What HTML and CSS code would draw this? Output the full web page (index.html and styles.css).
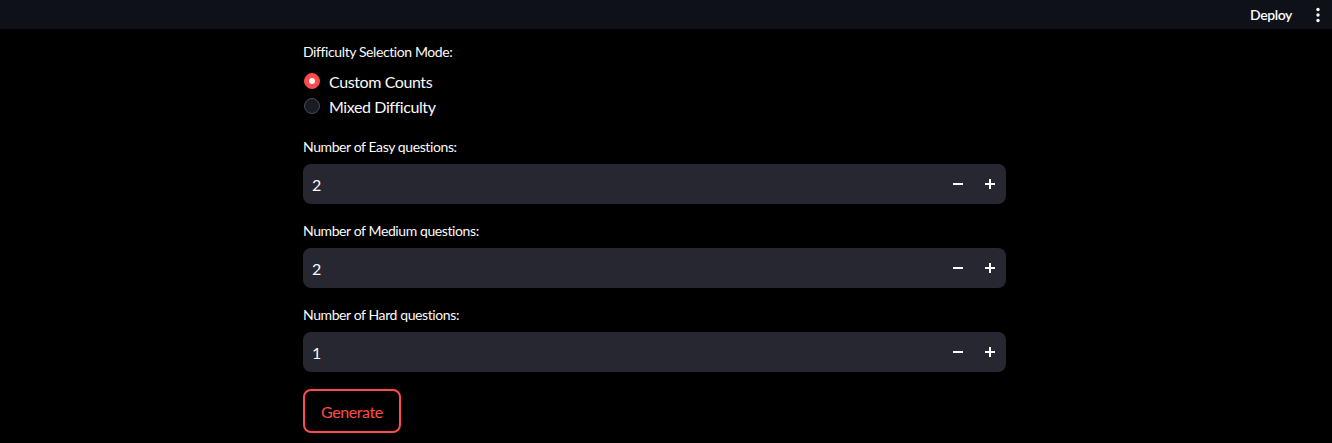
FILE: index.html
```html
<!DOCTYPE html>
<html>
<head>
<meta charset="utf-8">
<link rel="stylesheet" href="styles.css">
</head>
<body>
<header class="topbar">
  <span class="deploy">Deploy</span>
  <span class="kebab">
    <svg width="4" height="16" viewBox="0 0 4 16"><circle cx="2" cy="2.5" r="1.7" fill="#fafafa"/><circle cx="2" cy="8" r="1.7" fill="#fafafa"/><circle cx="2" cy="13.5" r="1.7" fill="#fafafa"/></svg>
  </span>
</header>
<main class="main">
  <div class="column">
    <div class="widget radio-widget">
      <div class="label">Difficulty Selection Mode:</div>
      <div class="radios">
        <div class="radio"><span class="dot on"></span><span>Custom Counts</span></div>
        <div class="radio"><span class="dot"></span><span>Mixed Difficulty</span></div>
      </div>
    </div>
    <div class="widget">
      <div class="label">Number of Easy questions:</div>
      <div class="numinput"><span class="val">2</span><span class="step">
        <svg width="10" height="10" viewBox="0 0 10 10"><rect x="0" y="4" width="10" height="2" fill="#fafafa"/></svg></span><span class="step">
        <svg width="10" height="10" viewBox="0 0 10 10"><rect x="0" y="4" width="10" height="2" fill="#fafafa"/><rect x="4" y="0" width="2" height="10" fill="#fafafa"/></svg></span></div>
    </div>
    <div class="widget">
      <div class="label">Number of Medium questions:</div>
      <div class="numinput"><span class="val">2</span><span class="step">
        <svg width="10" height="10" viewBox="0 0 10 10"><rect x="0" y="4" width="10" height="2" fill="#fafafa"/></svg></span><span class="step">
        <svg width="10" height="10" viewBox="0 0 10 10"><rect x="0" y="4" width="10" height="2" fill="#fafafa"/><rect x="4" y="0" width="2" height="10" fill="#fafafa"/></svg></span></div>
    </div>
    <div class="widget">
      <div class="label">Number of Hard questions:</div>
      <div class="numinput"><span class="val">1</span><span class="step">
        <svg width="10" height="10" viewBox="0 0 10 10"><rect x="0" y="4" width="10" height="2" fill="#fafafa"/></svg></span><span class="step">
        <svg width="10" height="10" viewBox="0 0 10 10"><rect x="0" y="4" width="10" height="2" fill="#fafafa"/><rect x="4" y="0" width="2" height="10" fill="#fafafa"/></svg></span></div>
    </div>
    <div class="widget">
      <button class="btn">Generate</button>
    </div>
  </div>
</main>
</body>
</html>
```
FILE: styles.css
```css
* { box-sizing: border-box; }
html, body { margin: 0; padding: 0; background: #000; }
body {
  font-family: "Lato", "Source Sans Pro", "Liberation Sans", sans-serif;
  color: #fafafa;
  letter-spacing: -0.4px;
  width: 1332px;
  height: 443px;
  overflow: hidden;
}
.topbar {
  height: 29px;
  background: #0e1117;
  display: flex;
  justify-content: flex-end;
  align-items: center;
  padding-right: 12px;
  gap: 24px;
}
.deploy { font-size: 14px; font-weight: 600; }
.kebab { display: flex; align-items: center; }
.main { display: flex; padding-top: 12px; padding-left: 303px; }
.column {
  width: 703px;
  display: flex;
  flex-direction: column;
  gap: 16px;
}
.radio-widget { margin-bottom: 2px; }
.label {
  font-size: 14px;
  line-height: 22px;
  min-height: 24px;
  margin-bottom: 4px;
}
.radios { display: flex; flex-direction: column; gap: 1px; margin-top: 1px; }
.radio { display: flex; align-items: center; height: 24px; gap: 9px; font-size: 16px; }
.dot {
  width: 16px; height: 16px; border-radius: 50%;
  margin-left: 1px;
  background: #1a1c24;
  border: 1px solid #4a4c55;
  display: inline-block;
  position: relative;
}
.dot.on { background: #ff4b4b; border-color: #ff4b4b; }
.dot.on::after {
  content: ""; position: absolute; left: 4px; top: 4px;
  width: 6px; height: 6px; border-radius: 50%; background: #fff;
}
.numinput {
  height: 40px;
  background: #262730;
  border-radius: 8px;
  display: flex;
  align-items: center;
  font-size: 16px;
}
.val { flex: 1; padding-left: 9px; }
.step { width: 32px; height: 40px; display: flex; align-items: center; justify-content: center; }
.btn {
  margin-top: 1px;
  height: 44px;
  padding: 0 16px;
  background: transparent;
  border: 2px solid #ff4b4b;
  color: #ff4b4b;
  border-radius: 8px;
  font-family: inherit;
  letter-spacing: -0.4px;
  font-size: 16px;
}
```
